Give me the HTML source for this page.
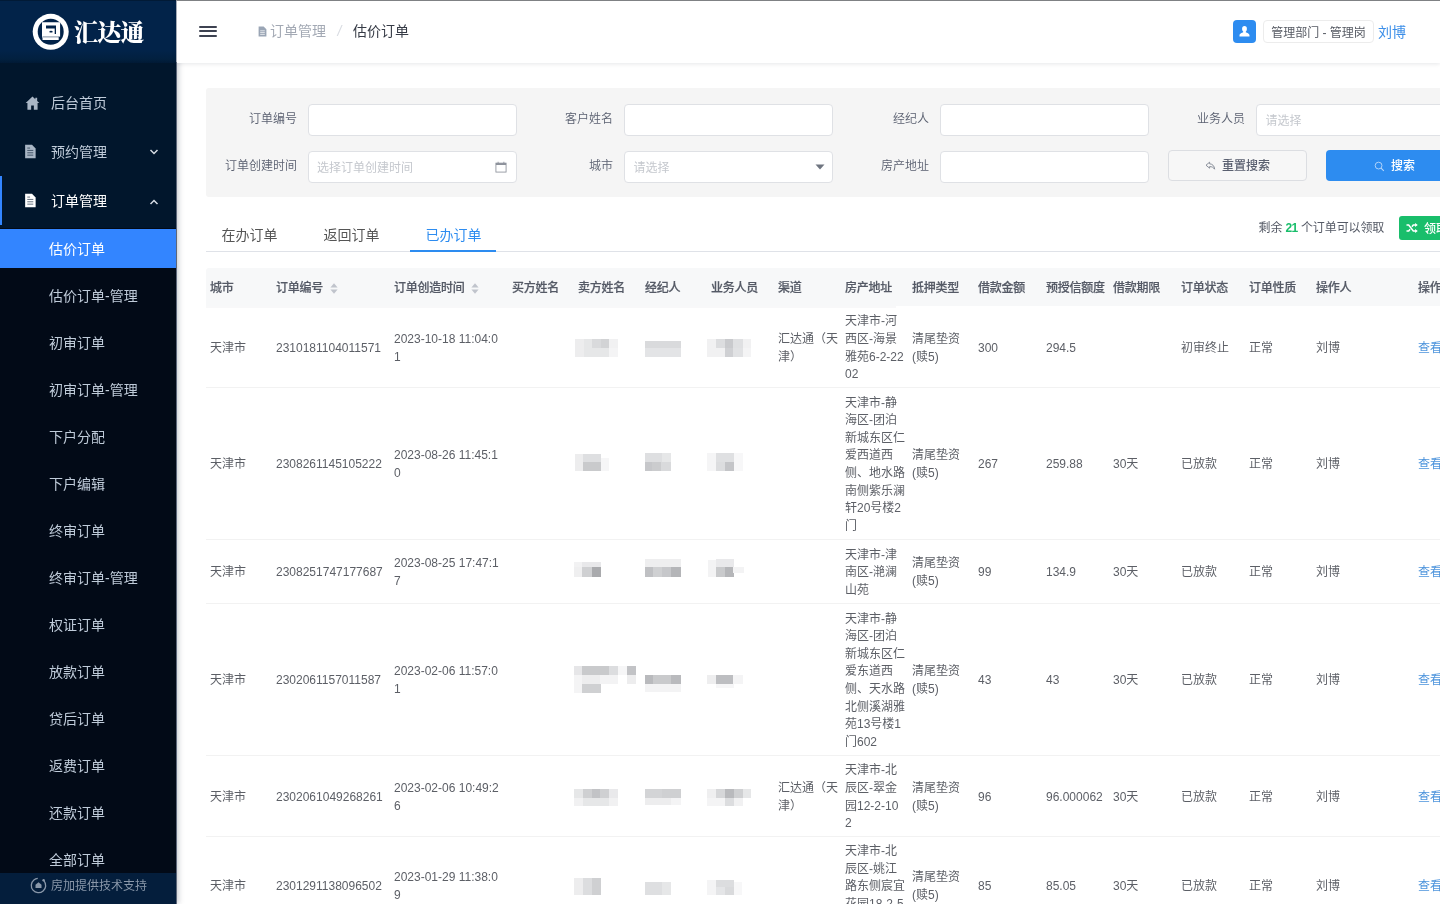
<!DOCTYPE html>
<html lang="zh-CN">
<head>
<meta charset="utf-8">
<title>估价订单</title>
<style>
*{box-sizing:border-box;margin:0;padding:0}
html,body{width:1440px;height:904px;overflow:hidden;background:#fff}
body{will-change:transform}
body{font-family:"Liberation Sans","Noto Sans CJK SC",sans-serif;font-size:12px;color:#515a6e;position:relative}
.abs{position:absolute}
/* sidebar */
#side{position:absolute;left:0;top:0;width:176px;height:904px;background:#020a17;z-index:5;box-shadow:2px 0 6px rgba(0,21,41,.25)}
#logo{position:absolute;left:0;top:0;width:176px;height:63px;box-shadow:inset 0 1px 0 #011a36;background:linear-gradient(#022349 0,#022349 80%,#02203f 94%,#011a35 100%)}
#topmenu{position:absolute;left:0;top:62px;width:176px;height:166px;background:#01162c}
.m1{position:absolute;left:0;width:176px;height:49px;line-height:49px;color:#bfcbd9;font-size:14px}
.m1 .t{position:absolute;left:51px;top:1px;white-space:nowrap}
.m1 svg{position:absolute}
.m2{position:absolute;left:0;width:176px;height:39px;line-height:40px;color:#bfcbd9;font-size:14px;padding-left:49px;white-space:nowrap}
.m2.on{background:#3385ff;color:#fff}
#sfoot{position:absolute;left:0;top:873px;width:176px;height:32px;background:#041e3c;color:#8a98aa;font-size:12px;line-height:26px}
/* header */
#head{position:absolute;left:176px;top:0;width:1264px;height:62.500px;background:#fff;box-shadow:0 1px 4px rgba(0,21,41,.10);z-index:6;border-top:1px solid #7f8184;border-left:1px solid #a5abb6}
#head .ham i{position:absolute;left:23px;width:17.500px;height:2px;background:#3d4251;border-radius:1px}
.bc{position:absolute;top:0;height:62px;line-height:62px;font-size:14px;white-space:nowrap}
/* filter */
#filter{position:absolute;left:206px;top:88px;width:1260px;height:108.500px;background:#f5f5f5;border-radius:3px}
.lb{position:absolute;height:30px;line-height:31px;font-weight:350;font-size:12px;color:#5a6070;text-align:right;width:100px;white-space:nowrap}
.ip{position:absolute;height:32px;background:#fff;border:1px solid #dfe1e5;border-radius:4px;font-size:12px;color:#c5c8ce;line-height:30px;padding-left:8px;padding-top:1px;white-space:nowrap}
.btn{position:absolute;height:31px;border-radius:4px;font-size:12px;font-weight:500;line-height:30px;white-space:nowrap}
/* tabs */
.tab{position:absolute;top:222.500px;margin-left:0.500px;height:24px;line-height:24px;font-size:14px;color:#555;white-space:nowrap}
/* table */
#thead{position:absolute;left:206px;top:268px;width:1260px;height:38px;background:#f7f8f9;border-radius:3px 0 0 0}
.th{position:absolute;top:0;letter-spacing:-0.250px;height:40px;line-height:40px;font-weight:500;-webkit-text-stroke:0.200px #555a66;font-size:12px;color:#555a66;white-space:nowrap}
.row{position:absolute;left:206px;width:1260px;border-bottom:1px solid #f2f2f2}
.c{position:absolute;top:0;height:100%;padding-top:3px;font-weight:400;display:flex;align-items:center;font-size:12px;line-height:17.6px;color:#5c5f66;white-space:nowrap}
.c a{color:#4d94dc;text-decoration:none}
.mz{position:absolute;left:0;top:0;width:600px;height:100%;filter:blur(0.5px)}
.mz i{position:absolute}
.blur{display:inline-block;height:14px;border-radius:2px;background:#d9d9de;filter:blur(1.5px);opacity:.8}
</style>
</head>
<body>
<div id="side">
  <div id="topmenu"></div>
  <div id="logo">
    <svg class="abs" style="left:32px;top:13px" width="38" height="38" viewBox="0 0 38 38">
      <circle cx="18.700" cy="18.800" r="18" fill="#fff"/>
      <circle cx="18.700" cy="18.800" r="13" fill="#022349"/>
      <path d="M10 9.200H28.100V23.700H26.700V27.100H10.500V24.500H10z" fill="#fff"/>
      <path d="M10.500 23.900H27.500" stroke="#022349" stroke-width="0.500"/>
      <path d="M14 12.400H24V21H22.700V15.600H14z" fill="#022349"/>
      <ellipse cx="19" cy="18.700" rx="1.700" ry="0.900" fill="#022349"/>
    </svg>
    <span class="abs" style="left:74px;top:14px;font-size:24px;line-height:34px;font-weight:900;color:#fff;letter-spacing:-0.8px;white-space:nowrap;font-family:'Noto Serif CJK SC','Liberation Serif',serif">汇达通</span>
  </div>
  <div class="m1" style="top:78px">
    <svg style="left:24.500px;top:17.500px" width="15" height="14.500" viewBox="0 0 14 14"><path d="M7 0.600L0.400 6.800h1.700v6.400h3.600V9.200h2.600v4h3.600V6.800h1.700L11.500 4.800V1.600H9.700v1.500z" fill="#a9b6c5"/></svg>
    <span class="t">后台首页</span>
  </div>
  <div class="m1" style="top:127px">
    <svg style="left:24px;top:17px" width="13" height="15" viewBox="0 0 12 14"><path d="M1 0.8h6.4l3.4 3.4v9H1z" fill="#a9b6c5"/><path d="M3 6h5.6M3 8.2h5.6M3 10.4h5.6M3 3.8h2.6" stroke="#01162c" stroke-width="0.700" opacity="0.800"/></svg>
    <span class="t">预约管理</span>
    <svg style="left:149px;top:21px" width="10" height="8" viewBox="0 0 10 8"><path d="M1.5 2l3.5 3.5L8.5 2" fill="none" stroke="#d5dbe3" stroke-width="1.5"/></svg>
  </div>
  <div class="m1" style="top:176px;color:#fff">
    <i class="abs" style="left:0;top:0;width:2px;height:49px;background:#3385ff"></i>
    <svg style="left:24px;top:17px" width="13" height="15" viewBox="0 0 12 14"><path d="M1 0.8h6.4l3.4 3.4v9H1z" fill="#fff"/><path d="M3 6h5.6M3 8.2h5.6M3 10.4h5.6M3 3.8h2.6" stroke="#01162c" stroke-width="0.700" opacity="0.800"/></svg>
    <span class="t">订单管理</span>
    <svg style="left:149px;top:22px" width="10" height="8" viewBox="0 0 10 8"><path d="M1.5 6l3.5-3.5L8.5 6" fill="none" stroke="#d5dbe3" stroke-width="1.5"/></svg>
  </div>
  <div class="m2 on" style="top:229px">估价订单</div>
  <div class="m2" style="top:276px">估价订单-管理</div>
  <div class="m2" style="top:323px">初审订单</div>
  <div class="m2" style="top:370px">初审订单-管理</div>
  <div class="m2" style="top:417px">下户分配</div>
  <div class="m2" style="top:464px">下户编辑</div>
  <div class="m2" style="top:511px">终审订单</div>
  <div class="m2" style="top:558px">终审订单-管理</div>
  <div class="m2" style="top:605px">权证订单</div>
  <div class="m2" style="top:652px">放款订单</div>
  <div class="m2" style="top:699px">贷后订单</div>
  <div class="m2" style="top:746px">返费订单</div>
  <div class="m2" style="top:793px">还款订单</div>
  <div class="m2" style="top:840px">全部订单</div>
  <div id="sfoot">
    <svg class="abs" style="left:30px;top:4px" width="17" height="17" viewBox="0 0 17 17"><circle cx="8.500" cy="8.500" r="7.200" fill="none" stroke="#8a98aa" stroke-width="1.300" stroke-dasharray="38 7.200" transform="rotate(-40 8.5 8.5)"/><path d="M8.5 5.2l-3 2.6v3.2h6V7.8z" fill="#8a98aa"/><circle cx="13.6" cy="3.2" r="1.2" fill="#8a98aa"/></svg>
    <span class="abs" style="left:51px;top:0">房加提供技术支持</span>
  </div>
</div>
<i class="abs" style="left:176px;top:62px;width:1px;height:842px;background:#5d677a;z-index:7"></i>
<div id="head"><div class="abs" style="left:-1px;top:-1px;width:1264px;height:62px">
  <div class="ham"><i style="top:25.500px"></i><i style="top:30.300px"></i><i style="top:35.300px"></i></div>
  <svg class="abs" style="left:82px;top:26px" width="9" height="11" viewBox="0 0 9 11"><path d="M0.6 0.5h5l2.8 2.8v7.2H0.6z" fill="#9aa5b5"/><path d="M2.2 4.8h4.6M2.2 6.6h4.6M2.2 8.4h4.6" stroke="#fff" stroke-width="0.7"/></svg>
  <span class="bc" style="left:94px;color:#a3a9b4">订单管理</span>
  <span class="bc" style="left:161.500px;color:#d9dce2;font-style:italic">/</span>
  <span class="bc" style="left:177px;color:#363b46">估价订单</span>
  <div class="abs" style="left:1057px;top:20px;width:23px;height:23px;border-radius:4px;background:#2d8cf0">
    <svg class="abs" style="left:5px;top:5px" width="13" height="13" viewBox="0 0 13 13"><ellipse cx="6.500" cy="3.900" rx="2.400" ry="2.800" fill="#fff"/><path d="M5.300 5.500h2.400v1.600c0 .8 3.800 1 3.800 3.400v1H1.500v-1c0-2.400 3.800-2.600 3.800-3.400z" fill="#fff"/></svg>
  </div>
  <div class="abs" style="left:1087px;top:20px;width:111px;height:23px;border:1px solid #ececec;border-radius:4px;font-size:12px;line-height:24px;color:#565a63;text-align:center;white-space:nowrap">管理部门 - 管理岗</div>
  <span class="abs" style="left:1202px;top:20.500px;font-size:14px;line-height:22px;color:#3b8ee8;white-space:nowrap">刘博</span>
</div></div>
<div id="filter">
  <span class="lb" style="left:-9px;top:16px">订单编号</span><div class="ip" style="left:102px;top:16px;width:209px"></div>
  <span class="lb" style="left:307px;top:16px">客户姓名</span><div class="ip" style="left:418px;top:16px;width:209px"></div>
  <span class="lb" style="left:623px;top:16px">经纪人</span><div class="ip" style="left:734px;top:16px;width:209px"></div>
  <span class="lb" style="left:939px;top:16px">业务人员</span><div class="ip" style="left:1050px;top:16px;width:220px;padding-left:8.500px">请选择</div>
  <span class="lb" style="left:-9px;top:63px">订单创建时间</span><div class="ip" style="left:102px;top:63px;width:209px">选择订单创建时间
    <svg class="abs" style="left:186px;top:8.500px" width="12" height="12" viewBox="0 0 13 13"><rect x="1" y="2.300" width="11" height="9.700" fill="none" stroke="#8a8f99" stroke-width="0.900"/><rect x="1" y="2.300" width="11" height="2" fill="#8a8f99"/><path d="M3.400 0.800v2M9.600 0.800v2" stroke="#8a8f99" stroke-width="0.900"/></svg>
  </div>
  <span class="lb" style="left:307px;top:63px">城市</span><div class="ip" style="left:418px;top:63px;width:209px;padding-left:8.500px">请选择
    <svg class="abs" style="left:190px;top:12px" width="10" height="6" viewBox="0 0 10 6"><path d="M0.5 0.5h9L5 5.6z" fill="#6f7580"/></svg>
  </div>
  <span class="lb" style="left:623px;top:63px">房产地址</span><div class="ip" style="left:734px;top:63px;width:209px"></div>
  <div class="btn" style="left:962px;top:62px;width:139px;border:1px solid #dcdee2;background:#f7f7f7;color:#5a6070;line-height:29px">
    <svg class="abs" style="left:36px;top:10px" width="11" height="10" viewBox="0 0 11 10"><path d="M4.6 1.2L1 4.2l3.6 3V5.6c2.2 0 3.8.6 5 2.6C9.400 5 7.600 3 4.600 2.800z" fill="none" stroke="#7d8390" stroke-width="0.9" stroke-linejoin="round"/></svg>
    <span class="abs" style="left:53px;top:1px">重置搜索</span>
  </div>
  <div class="btn" style="left:1120px;top:62px;width:150px;background:#2d8cf0;color:#fff;line-height:31px">
    <svg class="abs" style="left:48px;top:10.500px" width="11" height="11" viewBox="0 0 12 12"><circle cx="5" cy="5" r="3.700" fill="none" stroke="#b9d8f9" stroke-width="1"/><path d="M7.700 7.700l3 3" stroke="#b9d8f9" stroke-width="1.100"/></svg>
    <span class="abs" style="left:65px;top:1px">搜索</span>
  </div>
</div>
<span class="tab" style="left:221px">在办订单</span>
<span class="tab" style="left:323px">返回订单</span>
<span class="tab" style="left:425px;color:#2d8cf0">已办订单</span>
<i class="abs" style="left:206px;top:251px;width:1240px;height:1px;background:#dfe2e8"></i>
<i class="abs" style="left:410px;top:250px;width:86px;height:2px;background:#2d8cf0"></i>
<span class="abs" style="left:1258.500px;top:218px;letter-spacing:-0.100px;line-height:20px;font-size:12px;color:#555a66;white-space:nowrap">剩余 <b style="color:#19be6b;letter-spacing:-0.600px">21</b> 个订单可以领取</span>
<div class="abs" style="left:1399px;top:216px;width:60px;height:24px;border-radius:3px;background:#19be6b;color:#fff;font-size:12px;line-height:24px">
  <svg class="abs" style="left:7px;top:7px" width="12" height="10" viewBox="0 0 12 10"><path d="M0.500 2h2.200l4.600 6h2.600M0.500 8h2.200l1.400-1.800M5.900 3.800L7.300 2h2.600" fill="none" stroke="#fff" stroke-width="1.500"/><path d="M9.100 0L11.800 2 9.100 4zM9.100 6L11.800 8 9.100 10z" fill="#fff"/></svg>
  <span class="abs" style="left:25px;top:0.500px;white-space:nowrap;font-weight:500">领取</span>
</div>
<i class="abs" style="left:206px;top:306px;width:690px;height:1.500px;background:#f8f8f9"></i>
<div id="thead">
  <span class="th" style="left:4px">城市</span>
  <span class="th" style="left:70px">订单编号<svg style="position:absolute;left:100%;margin-left:6.500px;top:15px" width="8" height="11" viewBox="0 0 8 11"><path d="M4 0.300L7.600 4.600H0.400z" fill="#c0c4cc"/><path d="M4 10.700L7.600 6.400H0.400z" fill="#c0c4cc"/></svg></span>
  <span class="th" style="left:188px">订单创造时间<svg style="position:absolute;left:100%;margin-left:6.500px;top:15px" width="8" height="11" viewBox="0 0 8 11"><path d="M4 0.300L7.600 4.600H0.400z" fill="#c0c4cc"/><path d="M4 10.700L7.600 6.400H0.400z" fill="#c0c4cc"/></svg></span>
  <span class="th" style="left:306px">买方姓名</span>
  <span class="th" style="left:372px">卖方姓名</span>
  <span class="th" style="left:439px">经纪人</span>
  <span class="th" style="left:505px">业务人员</span>
  <span class="th" style="left:572px">渠道</span>
  <span class="th" style="left:639px">房产地址</span>
  <span class="th" style="left:706px">抵押类型</span>
  <span class="th" style="left:772px">借款金额</span>
  <span class="th" style="left:840px">预授信额度</span>
  <span class="th" style="left:907px">借款期限</span>
  <span class="th" style="left:975px">订单状态</span>
  <span class="th" style="left:1043px">订单性质</span>
  <span class="th" style="left:1110px">操作人</span>
  <span class="th" style="left:1212px">操作</span>
</div>
<div class="row" style="top:307px;height:81px">
  <div class="mz"><i style="left:368.5px;top:31.6px;width:9.4px;height:18.0px;background:#ededee"></i><i style="left:377.7px;top:31.6px;width:8.6px;height:9.1px;background:#e6e7e8"></i><i style="left:386.1px;top:31.6px;width:8.6px;height:9.1px;background:#d9dadc"></i><i style="left:394.5px;top:31.6px;width:8.6px;height:9.1px;background:#d2d3d5"></i><i style="left:402.9px;top:31.6px;width:9.3px;height:9.1px;background:#f1f1f2"></i><i style="left:377.7px;top:40.5px;width:25.4px;height:9.1px;background:#e6e7e8"></i><i style="left:402.9px;top:40.5px;width:9.3px;height:9.1px;background:#f4f4f5"></i><i style="left:438.8px;top:34.4px;width:36.1px;height:7.1px;background:#d9dadc"></i><i style="left:438.8px;top:41.3px;width:36.1px;height:8.3px;background:#e3e4e6"></i><i style="left:501.0px;top:31.6px;width:9.0px;height:18.0px;background:#f1f1f2"></i><i style="left:509.8px;top:31.6px;width:9.4px;height:9.1px;background:#dcdddf"></i><i style="left:519.0px;top:31.6px;width:8.6px;height:9.1px;background:#c9cacd"></i><i style="left:527.4px;top:31.6px;width:9.4px;height:9.1px;background:#dfe0e2"></i><i style="left:536.6px;top:31.6px;width:8.6px;height:9.1px;background:#f1f1f2"></i><i style="left:509.8px;top:40.5px;width:9.4px;height:9.1px;background:#f1f1f2"></i><i style="left:519.0px;top:40.5px;width:8.6px;height:9.1px;background:#cfd0d3"></i><i style="left:527.4px;top:40.5px;width:9.4px;height:9.1px;background:#e1e2e4"></i><i style="left:536.6px;top:40.5px;width:8.6px;height:9.1px;background:#f4f4f5"></i></div>
  <div class="c" style="left:4px"><span>天津市</span></div>
  <div class="c" style="left:70px"><span>2310181104011571</span></div>
  <div class="c" style="left:188px"><span>2023-10-18 11:04:0<br>1</span></div>
  <div class="c" style="left:572px"><span>汇达通（天<br>津）</span></div>
  <div class="c" style="left:639px"><span>天津市-河<br>西区-海景<br>雅苑6-2-22<br>02</span></div>
  <div class="c" style="left:706px"><span>清尾垫资<br>(赎5)</span></div>
  <div class="c" style="left:772px"><span>300</span></div>
  <div class="c" style="left:840px"><span>294.5</span></div>
  <div class="c" style="left:975px"><span>初审终止</span></div>
  <div class="c" style="left:1043px"><span>正常</span></div>
  <div class="c" style="left:1110px"><span>刘博</span></div>
  <div class="c" style="left:1212px"><a>查看</a></div>
</div>
<div class="row" style="top:388px;height:152px">
  <div class="mz"><i style="left:368.5px;top:66.4px;width:8.7px;height:16.8px;background:#ededee"></i><i style="left:377.0px;top:66.4px;width:17.7px;height:7.8px;background:#dedfe1"></i><i style="left:377.0px;top:74.0px;width:17.7px;height:9.2px;background:#c9cacc"></i><i style="left:394.5px;top:70.0px;width:8.7px;height:13.2px;background:#f6f6f7"></i><i style="left:438.8px;top:65.2px;width:17.0px;height:9.0px;background:#dedfe1"></i><i style="left:455.6px;top:65.2px;width:9.4px;height:9.0px;background:#e6e7e8"></i><i style="left:438.8px;top:74.0px;width:7.1px;height:9.2px;background:#c6c7ca"></i><i style="left:445.7px;top:74.0px;width:9.3px;height:9.2px;background:#cbccce"></i><i style="left:454.8px;top:74.0px;width:10.2px;height:9.2px;background:#d9dadc"></i><i style="left:501.4px;top:65.2px;width:8.6px;height:18.0px;background:#f5f5f6"></i><i style="left:509.8px;top:65.2px;width:18.6px;height:9.0px;background:#dfe0e2"></i><i style="left:509.8px;top:74.0px;width:9.4px;height:9.2px;background:#dcdddf"></i><i style="left:519.0px;top:74.0px;width:9.4px;height:9.2px;background:#c4c5c8"></i><i style="left:528.2px;top:65.2px;width:9.3px;height:18.0px;background:#f7f7f8"></i></div>
  <div class="c" style="left:4px"><span>天津市</span></div>
  <div class="c" style="left:70px"><span>2308261145105222</span></div>
  <div class="c" style="left:188px"><span>2023-08-26 11:45:1<br>0</span></div>
  <div class="c" style="left:639px"><span>天津市-静<br>海区-团泊<br>新城东区仁<br>爱西道西<br>侧、地水路<br>南侧紫乐澜<br>轩20号楼2<br>门</span></div>
  <div class="c" style="left:706px"><span>清尾垫资<br>(赎5)</span></div>
  <div class="c" style="left:772px"><span>267</span></div>
  <div class="c" style="left:840px"><span>259.88</span></div>
  <div class="c" style="left:907px"><span>30天</span></div>
  <div class="c" style="left:975px"><span>已放款</span></div>
  <div class="c" style="left:1043px"><span>正常</span></div>
  <div class="c" style="left:1110px"><span>刘博</span></div>
  <div class="c" style="left:1212px"><a>查看</a></div>
</div>
<div class="row" style="top:540px;height:64px">
  <div class="mz"><i style="left:368.1px;top:22.4px;width:8.5px;height:5.2px;background:#f2f2f3"></i><i style="left:376.4px;top:22.4px;width:18.4px;height:5.2px;background:#e8e8ea"></i><i style="left:368.1px;top:27.4px;width:8.5px;height:9.3px;background:#efeff0"></i><i style="left:376.4px;top:27.4px;width:9.3px;height:9.3px;background:#cfd0d2"></i><i style="left:385.5px;top:27.4px;width:9.3px;height:9.3px;background:#a9aaad"></i><i style="left:438.6px;top:19.0px;width:36.4px;height:8.6px;background:#eeeeef"></i><i style="left:438.6px;top:27.4px;width:8.5px;height:9.3px;background:#bfc0c3"></i><i style="left:446.9px;top:27.4px;width:9.3px;height:9.3px;background:#cfd0d2"></i><i style="left:456.0px;top:27.4px;width:9.4px;height:9.3px;background:#c6c7ca"></i><i style="left:465.2px;top:27.4px;width:9.8px;height:9.3px;background:#b4b5b8"></i><i style="left:501.7px;top:20.0px;width:8.5px;height:16.7px;background:#f3f3f4"></i><i style="left:510.0px;top:19.0px;width:17.6px;height:8.6px;background:#e9e9eb"></i><i style="left:510.0px;top:27.4px;width:9.3px;height:9.3px;background:#c9cacc"></i><i style="left:519.1px;top:27.4px;width:8.5px;height:9.3px;background:#b5b6b9"></i><i style="left:527.4px;top:27.4px;width:11.0px;height:5.2px;background:#f3f3f4"></i></div>
  <div class="c" style="left:4px"><span>天津市</span></div>
  <div class="c" style="left:70px"><span>2308251747177687</span></div>
  <div class="c" style="left:188px"><span>2023-08-25 17:47:1<br>7</span></div>
  <div class="c" style="left:639px"><span>天津市-津<br>南区-滟澜<br>山苑</span></div>
  <div class="c" style="left:706px"><span>清尾垫资<br>(赎5)</span></div>
  <div class="c" style="left:772px"><span>99</span></div>
  <div class="c" style="left:840px"><span>134.9</span></div>
  <div class="c" style="left:907px"><span>30天</span></div>
  <div class="c" style="left:975px"><span>已放款</span></div>
  <div class="c" style="left:1043px"><span>正常</span></div>
  <div class="c" style="left:1110px"><span>刘博</span></div>
  <div class="c" style="left:1212px"><a>查看</a></div>
</div>
<div class="row" style="top:604px;height:152px">
  <div class="mz"><i style="left:368.1px;top:62.1px;width:8.5px;height:8.9px;background:#e6e6e8"></i><i style="left:376.4px;top:62.1px;width:26.8px;height:8.9px;background:#c9cacc"></i><i style="left:403.0px;top:62.1px;width:9.2px;height:8.9px;background:#dcdddf"></i><i style="left:412.0px;top:62.1px;width:8.6px;height:8.9px;background:#f6f6f7"></i><i style="left:421.2px;top:62.1px;width:9.0px;height:8.9px;background:#c2c3c6"></i><i style="left:368.1px;top:70.8px;width:8.5px;height:17.8px;background:#f4f4f5"></i><i style="left:376.4px;top:70.8px;width:17.6px;height:9.0px;background:#ededee"></i><i style="left:393.8px;top:70.8px;width:18.4px;height:9.0px;background:#f3f3f4"></i><i style="left:421.2px;top:70.8px;width:9.0px;height:9.0px;background:#ededee"></i><i style="left:376.4px;top:79.6px;width:18.4px;height:9.0px;background:#cfd0d2"></i><i style="left:438.6px;top:70.8px;width:8.5px;height:9.0px;background:#b9babd"></i><i style="left:446.9px;top:70.8px;width:18.5px;height:9.0px;background:#c9cacc"></i><i style="left:465.2px;top:70.8px;width:9.8px;height:9.0px;background:#b9babd"></i><i style="left:438.6px;top:79.6px;width:36.4px;height:8.5px;background:#f3f3f4"></i><i style="left:500.8px;top:70.8px;width:9.4px;height:9.0px;background:#eeeeef"></i><i style="left:510.0px;top:70.8px;width:17.6px;height:9.0px;background:#bdbec1"></i><i style="left:527.4px;top:70.8px;width:9.3px;height:9.0px;background:#f4f4f5"></i><i style="left:510.0px;top:79.6px;width:17.6px;height:4.6px;background:#f6f6f7"></i></div>
  <div class="c" style="left:4px"><span>天津市</span></div>
  <div class="c" style="left:70px"><span>2302061157011587</span></div>
  <div class="c" style="left:188px"><span>2023-02-06 11:57:0<br>1</span></div>
  <div class="c" style="left:639px"><span>天津市-静<br>海区-团泊<br>新城东区仁<br>爱东道西<br>侧、天水路<br>北侧溪湖雅<br>苑13号楼1<br>门602</span></div>
  <div class="c" style="left:706px"><span>清尾垫资<br>(赎5)</span></div>
  <div class="c" style="left:772px"><span>43</span></div>
  <div class="c" style="left:840px"><span>43</span></div>
  <div class="c" style="left:907px"><span>30天</span></div>
  <div class="c" style="left:975px"><span>已放款</span></div>
  <div class="c" style="left:1043px"><span>正常</span></div>
  <div class="c" style="left:1110px"><span>刘博</span></div>
  <div class="c" style="left:1212px"><a>查看</a></div>
</div>
<div class="row" style="top:756px;height:81px">
  <div class="mz"><i style="left:368.0px;top:33.4px;width:9.1px;height:8.6px;background:#e6e7e8"></i><i style="left:376.9px;top:33.4px;width:9.4px;height:8.6px;background:#cfd0d2"></i><i style="left:386.1px;top:33.4px;width:8.1px;height:8.6px;background:#c2c3c6"></i><i style="left:394.0px;top:33.4px;width:9.4px;height:8.6px;background:#cfd0d2"></i><i style="left:403.2px;top:33.4px;width:9.0px;height:8.6px;background:#e9e9eb"></i><i style="left:368.0px;top:41.8px;width:9.1px;height:8.3px;background:#f1f1f2"></i><i style="left:376.9px;top:41.8px;width:26.5px;height:8.3px;background:#e6e7e8"></i><i style="left:403.2px;top:41.8px;width:9.0px;height:8.3px;background:#f1f1f2"></i><i style="left:438.8px;top:33.4px;width:17.8px;height:9.1px;background:#d3d4d6"></i><i style="left:456.4px;top:33.4px;width:18.5px;height:9.1px;background:#cfd0d2"></i><i style="left:438.8px;top:42.3px;width:26.2px;height:6.9px;background:#ededee"></i><i style="left:464.8px;top:42.3px;width:10.1px;height:6.9px;background:#f4f4f5"></i><i style="left:501.4px;top:33.4px;width:8.6px;height:9.1px;background:#efeff0"></i><i style="left:509.8px;top:33.4px;width:9.4px;height:9.1px;background:#d6d7d9"></i><i style="left:519.0px;top:33.4px;width:9.1px;height:9.1px;background:#b9babd"></i><i style="left:527.9px;top:33.4px;width:8.9px;height:9.1px;background:#cfd0d2"></i><i style="left:536.6px;top:33.4px;width:8.6px;height:9.1px;background:#e6e7e8"></i><i style="left:501.4px;top:42.3px;width:17.8px;height:7.8px;background:#f4f4f5"></i><i style="left:519.0px;top:42.3px;width:9.1px;height:7.8px;background:#dcdddf"></i><i style="left:527.9px;top:42.3px;width:8.9px;height:7.8px;background:#f1f1f2"></i></div>
  <div class="c" style="left:4px"><span>天津市</span></div>
  <div class="c" style="left:70px"><span>2302061049268261</span></div>
  <div class="c" style="left:188px"><span>2023-02-06 10:49:2<br>6</span></div>
  <div class="c" style="left:572px"><span>汇达通（天<br>津）</span></div>
  <div class="c" style="left:639px"><span>天津市-北<br>辰区-翠金<br>园12-2-10<br>2</span></div>
  <div class="c" style="left:706px"><span>清尾垫资<br>(赎5)</span></div>
  <div class="c" style="left:772px"><span>96</span></div>
  <div class="c" style="left:840px"><span>96.000062</span></div>
  <div class="c" style="left:907px"><span>30天</span></div>
  <div class="c" style="left:975px"><span>已放款</span></div>
  <div class="c" style="left:1043px"><span>正常</span></div>
  <div class="c" style="left:1110px"><span>刘博</span></div>
  <div class="c" style="left:1212px"><a>查看</a></div>
</div>
<div class="row" style="top:837px;height:98px">
  <div class="mz"><i style="left:368.0px;top:40.7px;width:9.1px;height:17.5px;background:#ededee"></i><i style="left:376.9px;top:40.7px;width:9.4px;height:17.5px;background:#dcdddf"></i><i style="left:386.1px;top:40.7px;width:8.6px;height:17.5px;background:#cfd0d2"></i><i style="left:438.8px;top:45.3px;width:17.4px;height:12.9px;background:#dedfe1"></i><i style="left:456.0px;top:45.3px;width:9.0px;height:12.9px;background:#e6e7e8"></i><i style="left:501.4px;top:43.0px;width:8.6px;height:15.2px;background:#f4f4f5"></i><i style="left:509.8px;top:43.0px;width:18.3px;height:7.1px;background:#dcdddf"></i><i style="left:509.8px;top:49.9px;width:9.4px;height:8.3px;background:#e4e5e7"></i><i style="left:519.0px;top:49.9px;width:9.1px;height:8.3px;background:#d9dadc"></i><i style="left:527.9px;top:45.0px;width:8.1px;height:13.2px;background:#f7f7f8"></i></div>
  <div class="c" style="left:4px"><span>天津市</span></div>
  <div class="c" style="left:70px"><span>2301291138096502</span></div>
  <div class="c" style="left:188px"><span>2023-01-29 11:38:0<br>9</span></div>
  <div class="c" style="left:639px"><span>天津市-北<br>辰区-姚江<br>路东侧宸宜<br>花园18-2-5<br>02</span></div>
  <div class="c" style="left:706px"><span>清尾垫资<br>(赎5)</span></div>
  <div class="c" style="left:772px"><span>85</span></div>
  <div class="c" style="left:840px"><span>85.05</span></div>
  <div class="c" style="left:907px"><span>30天</span></div>
  <div class="c" style="left:975px"><span>已放款</span></div>
  <div class="c" style="left:1043px"><span>正常</span></div>
  <div class="c" style="left:1110px"><span>刘博</span></div>
  <div class="c" style="left:1212px"><a>查看</a></div>
</div>
</body>
</html>
